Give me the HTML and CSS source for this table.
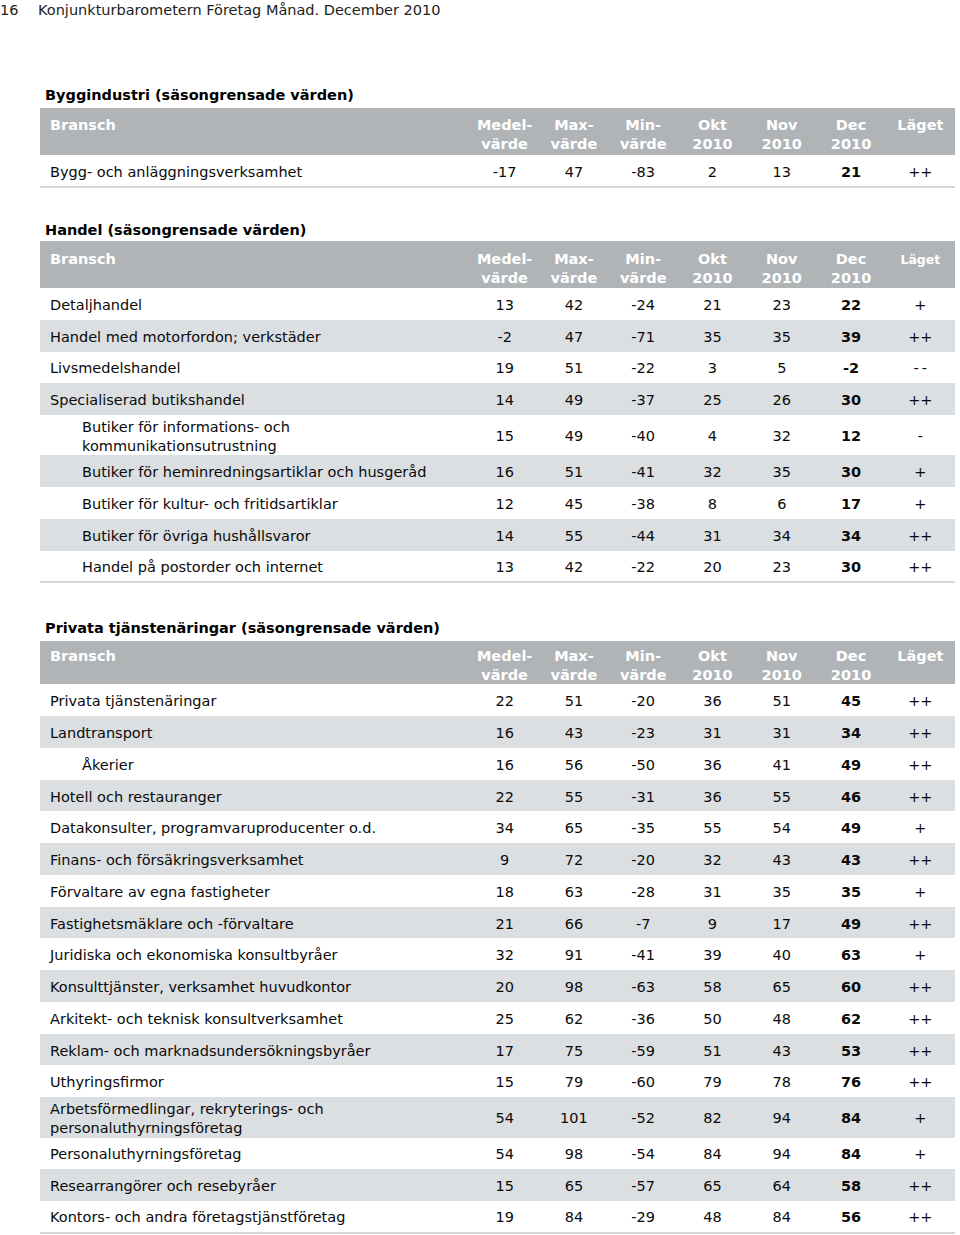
FILE: index.html
```html
<!DOCTYPE html>
<html lang="sv">
<head>
<meta charset="utf-8">
<title>Konjunkturbarometern Företag Månad. December 2010</title>
<link rel="stylesheet" href="styles.css">
</head>
<body>
<div class="page">
  <div class="page-head"><span class="page-no">16</span><span>Konjunkturbarometern Företag Månad. December 2010</span></div>

  <section class="sec sec-first">
    <h2 class="title">Byggindustri (säsongrensade värden)</h2>
    <table class="data">
      <colgroup><col class="c-label"><col><col><col><col><col><col><col></colgroup>
      <thead>
        <tr><th class="lbl">Bransch</th><th>Medel-<br>värde</th><th>Max-<br>värde</th><th>Min-<br>värde</th><th>Okt<br>2010</th><th>Nov<br>2010</th><th>Dec<br>2010</th><th>Läget</th></tr>
      </thead>
      <tbody>
        <tr><td class="lbl">Bygg- och anläggningsverksamhet</td><td>-17</td><td>47</td><td>-83</td><td>2</td><td>13</td><td class="b">21</td><td>++</td></tr>
      </tbody>
    </table>
  </section>

  <section class="sec sec-second">
    <h2 class="title tight">Handel (säsongrensade värden)</h2>
    <table class="data t2">
      <colgroup><col class="c-label"><col><col><col><col><col><col><col></colgroup>
      <thead>
        <tr><th class="lbl">Bransch</th><th>Medel-<br>värde</th><th>Max-<br>värde</th><th>Min-<br>värde</th><th>Okt<br>2010</th><th>Nov<br>2010</th><th>Dec<br>2010</th><th class="small">Läget</th></tr>
      </thead>
      <tbody>
        <tr><td class="lbl">Detaljhandel</td><td>13</td><td>42</td><td>-24</td><td>21</td><td>23</td><td class="b">22</td><td>+</td></tr>
        <tr><td class="lbl">Handel med motorfordon; verkstäder</td><td>-2</td><td>47</td><td>-71</td><td>35</td><td>35</td><td class="b">39</td><td>++</td></tr>
        <tr><td class="lbl">Livsmedelshandel</td><td>19</td><td>51</td><td>-22</td><td>3</td><td>5</td><td class="b">-2</td><td class="dash">--</td></tr>
        <tr><td class="lbl">Specialiserad butikshandel</td><td>14</td><td>49</td><td>-37</td><td>25</td><td>26</td><td class="b">30</td><td>++</td></tr>
        <tr class="two"><td class="lbl sub">Butiker för informations- och<br>kommunikationsutrustning</td><td>15</td><td>49</td><td>-40</td><td>4</td><td>32</td><td class="b">12</td><td class="dash">-</td></tr>
        <tr><td class="lbl sub">Butiker för heminredningsartiklar och husgeråd</td><td>16</td><td>51</td><td>-41</td><td>32</td><td>35</td><td class="b">30</td><td>+</td></tr>
        <tr><td class="lbl sub">Butiker för kultur- och fritidsartiklar</td><td>12</td><td>45</td><td>-38</td><td>8</td><td>6</td><td class="b">17</td><td>+</td></tr>
        <tr><td class="lbl sub">Butiker för övriga hushållsvaror</td><td>14</td><td>55</td><td>-44</td><td>31</td><td>34</td><td class="b">34</td><td>++</td></tr>
        <tr><td class="lbl sub">Handel på postorder och internet</td><td>13</td><td>42</td><td>-22</td><td>20</td><td>23</td><td class="b">30</td><td>++</td></tr>
      </tbody>
    </table>
  </section>

  <section class="sec sec-third">
    <h2 class="title">Privata tjänstenäringar (säsongrensade värden)</h2>
    <table class="data t3">
      <colgroup><col class="c-label"><col><col><col><col><col><col><col></colgroup>
      <thead>
        <tr><th class="lbl">Bransch</th><th>Medel-<br>värde</th><th>Max-<br>värde</th><th>Min-<br>värde</th><th>Okt<br>2010</th><th>Nov<br>2010</th><th>Dec<br>2010</th><th>Läget</th></tr>
      </thead>
      <tbody>
        <tr><td class="lbl">Privata tjänstenäringar</td><td>22</td><td>51</td><td>-20</td><td>36</td><td>51</td><td class="b">45</td><td>++</td></tr>
        <tr><td class="lbl">Landtransport</td><td>16</td><td>43</td><td>-23</td><td>31</td><td>31</td><td class="b">34</td><td>++</td></tr>
        <tr><td class="lbl sub">Åkerier</td><td>16</td><td>56</td><td>-50</td><td>36</td><td>41</td><td class="b">49</td><td>++</td></tr>
        <tr><td class="lbl">Hotell och restauranger</td><td>22</td><td>55</td><td>-31</td><td>36</td><td>55</td><td class="b">46</td><td>++</td></tr>
        <tr><td class="lbl">Datakonsulter, programvaruproducenter o.d.</td><td>34</td><td>65</td><td>-35</td><td>55</td><td>54</td><td class="b">49</td><td>+</td></tr>
        <tr><td class="lbl">Finans- och försäkringsverksamhet</td><td>9</td><td>72</td><td>-20</td><td>32</td><td>43</td><td class="b">43</td><td>++</td></tr>
        <tr><td class="lbl">Förvaltare av egna fastigheter</td><td>18</td><td>63</td><td>-28</td><td>31</td><td>35</td><td class="b">35</td><td>+</td></tr>
        <tr><td class="lbl">Fastighetsmäklare och -förvaltare</td><td>21</td><td>66</td><td>-7</td><td>9</td><td>17</td><td class="b">49</td><td>++</td></tr>
        <tr><td class="lbl">Juridiska och ekonomiska konsultbyråer</td><td>32</td><td>91</td><td>-41</td><td>39</td><td>40</td><td class="b">63</td><td>+</td></tr>
        <tr><td class="lbl">Konsulttjänster, verksamhet huvudkontor</td><td>20</td><td>98</td><td>-63</td><td>58</td><td>65</td><td class="b">60</td><td>++</td></tr>
        <tr><td class="lbl">Arkitekt- och teknisk konsultverksamhet</td><td>25</td><td>62</td><td>-36</td><td>50</td><td>48</td><td class="b">62</td><td>++</td></tr>
        <tr><td class="lbl">Reklam- och marknadsundersökningsbyråer</td><td>17</td><td>75</td><td>-59</td><td>51</td><td>43</td><td class="b">53</td><td>++</td></tr>
        <tr><td class="lbl">Uthyringsfirmor</td><td>15</td><td>79</td><td>-60</td><td>79</td><td>78</td><td class="b">76</td><td>++</td></tr>
        <tr class="two"><td class="lbl">Arbetsförmedlingar, rekryterings- och<br>personaluthyrningsföretag</td><td>54</td><td>101</td><td>-52</td><td>82</td><td>94</td><td class="b">84</td><td>+</td></tr>
        <tr><td class="lbl">Personaluthyrningsföretag</td><td>54</td><td>98</td><td>-54</td><td>84</td><td>94</td><td class="b">84</td><td>+</td></tr>
        <tr><td class="lbl">Researrangörer och resebyråer</td><td>15</td><td>65</td><td>-57</td><td>65</td><td>64</td><td class="b">58</td><td>++</td></tr>
        <tr><td class="lbl">Kontors- och andra företagstjänstföretag</td><td>19</td><td>84</td><td>-29</td><td>48</td><td>84</td><td class="b">56</td><td>++</td></tr>
      </tbody>
    </table>
  </section>
</div>
</body>
</html>
```

FILE: styles.css
```css
html, body {
  margin: 0;
  padding: 0;
  background: #ffffff;
}

body {
  font-family: "DejaVu Sans", Verdana, sans-serif;
  font-size: 14.5px;
  color: #0a0a0a;
}

.page {
  width: 960px;
}

.page-head {
  display: flex;
  line-height: 20px;
  height: 20px;
  color: #222222;
}

.page-no {
  width: 38px;
}

.sec {
  padding-left: 40px;
  width: 915px;
}

.sec-first { margin-top: 66px; }
.sec-second { margin-top: 33px; }
.sec-third { margin-top: 36px; }

.title {
  margin: 0 0 0 5px;
  font-size: 14.5px;
  font-weight: bold;
  line-height: 18px;
  height: 22px;
  color: #000000;
}

.title.tight {
  height: 20px;
}

.data {
  width: 915px;
  table-layout: fixed;
  border-collapse: collapse;
  border-spacing: 0;
}

.c-label {
  width: 430px;
}

.data thead th {
  background: #b1b4b7;
  color: #ffffff;
  font-weight: bold;
  text-align: center;
  vertical-align: top;
  padding: 8px 0 0;
  height: 47px;
  box-sizing: border-box;
  line-height: 19px;
}

.data.t2 thead th {
  padding-top: 9px;
}

.data.t3 thead th {
  padding-top: 6px;
  height: 43px;
  line-height: 18.5px;
}

.data th.small {
  font-size: 12.5px;
}

.data th.lbl,
.data td.lbl {
  text-align: left;
  padding-left: 10px;
}

.data td.sub {
  padding-left: 42px;
}

.data tbody tr {
  height: 31.75px;
}

.data tbody tr:first-child:last-child {
  height: 32px;
}

.data tbody tr:nth-child(even) {
  background: #dcdfe2;
}

.data tbody tr:last-child td {
  border-bottom: 2px solid #d6d9dc;
}

.data td {
  padding: 3px 0 0;
  box-sizing: border-box;
  text-align: center;
  vertical-align: middle;
  line-height: 19px;
  white-space: nowrap;
}

.data tr.two {
  height: 40px;
}

.data tr.two td.lbl {
  line-height: 18.7px;
}

.data td.b {
  font-weight: bold;
}

.data td.dash {
  letter-spacing: 3px;
  text-indent: 3px;
}
```
